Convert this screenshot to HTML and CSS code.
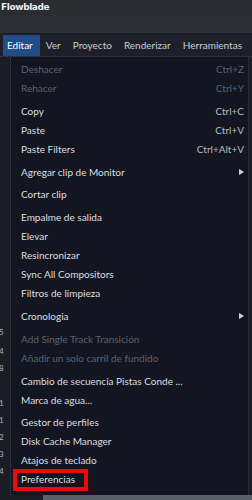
FILE: index.html
```html
<!DOCTYPE html>
<html>
<head>
<meta charset="utf-8">
<link rel="stylesheet" href="styles.css">
</head>
<body>
<div class="app">
  <div class="titlebar">Flowblade</div>
  <div class="toolbar"></div>
  <div class="menubar">
    <span class="mb-item active">Editar</span>
    <span class="mb-item">Ver</span>
    <span class="mb-item">Proyecto</span>
    <span class="mb-item">Renderizar</span>
    <span class="mb-item">Herramientas</span>
    <span class="mb-item">Ayuda</span>
  </div>
  <div class="main">
    <div class="leftstrip">
      <div class="digits">
        <span class="d1">5</span><span>4</span><span>8</span><span class="d2">1</span><span>1</span><span>2</span><span>3</span><span>4</span>
      </div>
    </div>
    <div class="dropdown">
      <div class="item disabled"><span class="label">Deshacer</span><span class="acc">Ctrl+Z</span></div>
      <div class="item disabled"><span class="label">Rehacer</span><span class="acc">Ctrl+Y</span></div>
      <div class="sep"></div>
      <div class="item"><span class="label">Copy</span><span class="acc">Ctrl+C</span></div>
      <div class="item"><span class="label">Paste</span><span class="acc">Ctrl+V</span></div>
      <div class="item"><span class="label">Paste Filters</span><span class="acc">Ctrl+Alt+V</span></div>
      <div class="sep"></div>
      <div class="item"><span class="label">Agregar clip de Monitor</span><span class="arrow"></span></div>
      <div class="sep small"></div>
      <div class="item"><span class="label">Cortar clip</span></div>
      <div class="sep"></div>
      <div class="item"><span class="label">Empalme de salida</span></div>
      <div class="item"><span class="label">Elevar</span></div>
      <div class="item"><span class="label">Resincronizar</span></div>
      <div class="item"><span class="label">Sync All Compositors</span></div>
      <div class="item"><span class="label">Filtros de limpieza</span></div>
      <div class="sep"></div>
      <div class="item"><span class="label">Cronologia</span><span class="arrow"></span></div>
      <div class="sep"></div>
      <div class="item disabled"><span class="label">Add Single Track Transición</span></div>
      <div class="item disabled"><span class="label">Añadir un solo carril de fundido</span></div>
      <div class="sep"></div>
      <div class="item"><span class="label">Cambio de secuencia Pistas Conde ...</span></div>
      <div class="item"><span class="label">Marca de agua...</span></div>
      <div class="sep small"></div>
      <div class="item"><span class="label">Gestor de perfiles</span></div>
      <div class="item"><span class="label">Disk Cache Manager</span></div>
      <div class="item"><span class="label">Atajos de teclado</span></div>
      <div class="item highlight"><span class="label">Preferencias</span></div>
    </div>
    <div class="rightstrip"></div>
  </div>
  <div class="bottombar"><div class="bb-dark"></div><div class="bb-gray"></div></div>
</div>
</body>
</html>
```
FILE: styles.css
```css
html, body {
  margin: 0;
  padding: 0;
  background: #1b1e25;
}
.app {
  width: 252px;
  height: 500px;
  overflow: hidden;
  display: flex;
  flex-direction: column;
  font-family: Lato, "Noto Sans", sans-serif;
}
.titlebar {
  height: 15px;
  background: #2a2c31;
  color: #eceef0;
  font: bold 9px/15px "DejaVu Sans", sans-serif;
  padding-left: 1px;
  letter-spacing: -0.4px;
}
.toolbar {
  height: 18px;
  background: #2c2f36;
  border-bottom: 2px solid #1a1c22;
}
.menubar {
  height: 22px;
  background: #1d2029;
  display: flex;
  align-items: stretch;
  padding-left: 3px;
  border-bottom: 1px dotted #3a3e47;
  box-sizing: border-box;
  white-space: nowrap;
  overflow: hidden;
}
.mb-item {
  color: #c9ccd2;
  font-size: 10px;
  line-height: 21px;
  padding: 0 6px;
  flex: none;
}
.mb-item.active {
  background: #1e4d8a;
  color: #ffffff;
  padding: 0 7px 0 4px;
}
.main {
  flex: 1;
  display: flex;
  min-height: 0;
}
.leftstrip {
  width: 10px;
  background: #1a1d25;
  border-right: 1px dotted #3c4049;
  overflow: hidden;
}
.digits {
  display: flex;
  flex-direction: column;
  color: #aeb2ba;
  font-size: 8px;
  line-height: 9px;
  margin-left: -1px;
  padding-top: 271px;
}
.digits span {
  height: 17px;
  width: 5px;
  overflow: hidden;
}
.digits .d1 { margin-bottom: 2px; }
.digits .d2 { margin-top: 18px; }
.dropdown {
  flex: 1;
  background: #131620;
  padding-top: 2px;
  display: flex;
  flex-direction: column;
}
.rightstrip {
  width: 3px;
  background: #1b1e26;
  border-left: 1px dotted #2e323a;
}
.item {
  height: 19px;
  display: flex;
  align-items: center;
  padding: 0 4px 0 10px;
  color: #dcdee3;
  font-size: 10px;
  white-space: nowrap;
  position: relative;
  flex: none;
}
.item .label {
  flex: 1;
  overflow: hidden;
}
.item.disabled {
  color: #5d616b;
}
.acc {
  color: #b8bbc2;
  font-size: 10px;
}
.item.disabled .acc {
  color: #5d616b;
}
.arrow {
  width: 0;
  height: 0;
  border-left: 5px solid #d0d3d8;
  border-top: 3.5px solid transparent;
  border-bottom: 3.5px solid transparent;
}
.sep { height: 4px; flex: none; }
.sep.small { height: 3px; }
.item.highlight::after {
  content: "";
  position: absolute;
  left: 2px;
  top: 0;
  width: 75px;
  height: 22px;
  border: 4px solid #ee0a0a;
  box-sizing: border-box;
}
.bottombar {
  height: 5px;
  display: flex;
  flex: none;
}
.bb-dark {
  width: 43px;
  background: #1a1d24;
}
.bb-gray {
  flex: 1;
  background: #5b5f67;
}
```
